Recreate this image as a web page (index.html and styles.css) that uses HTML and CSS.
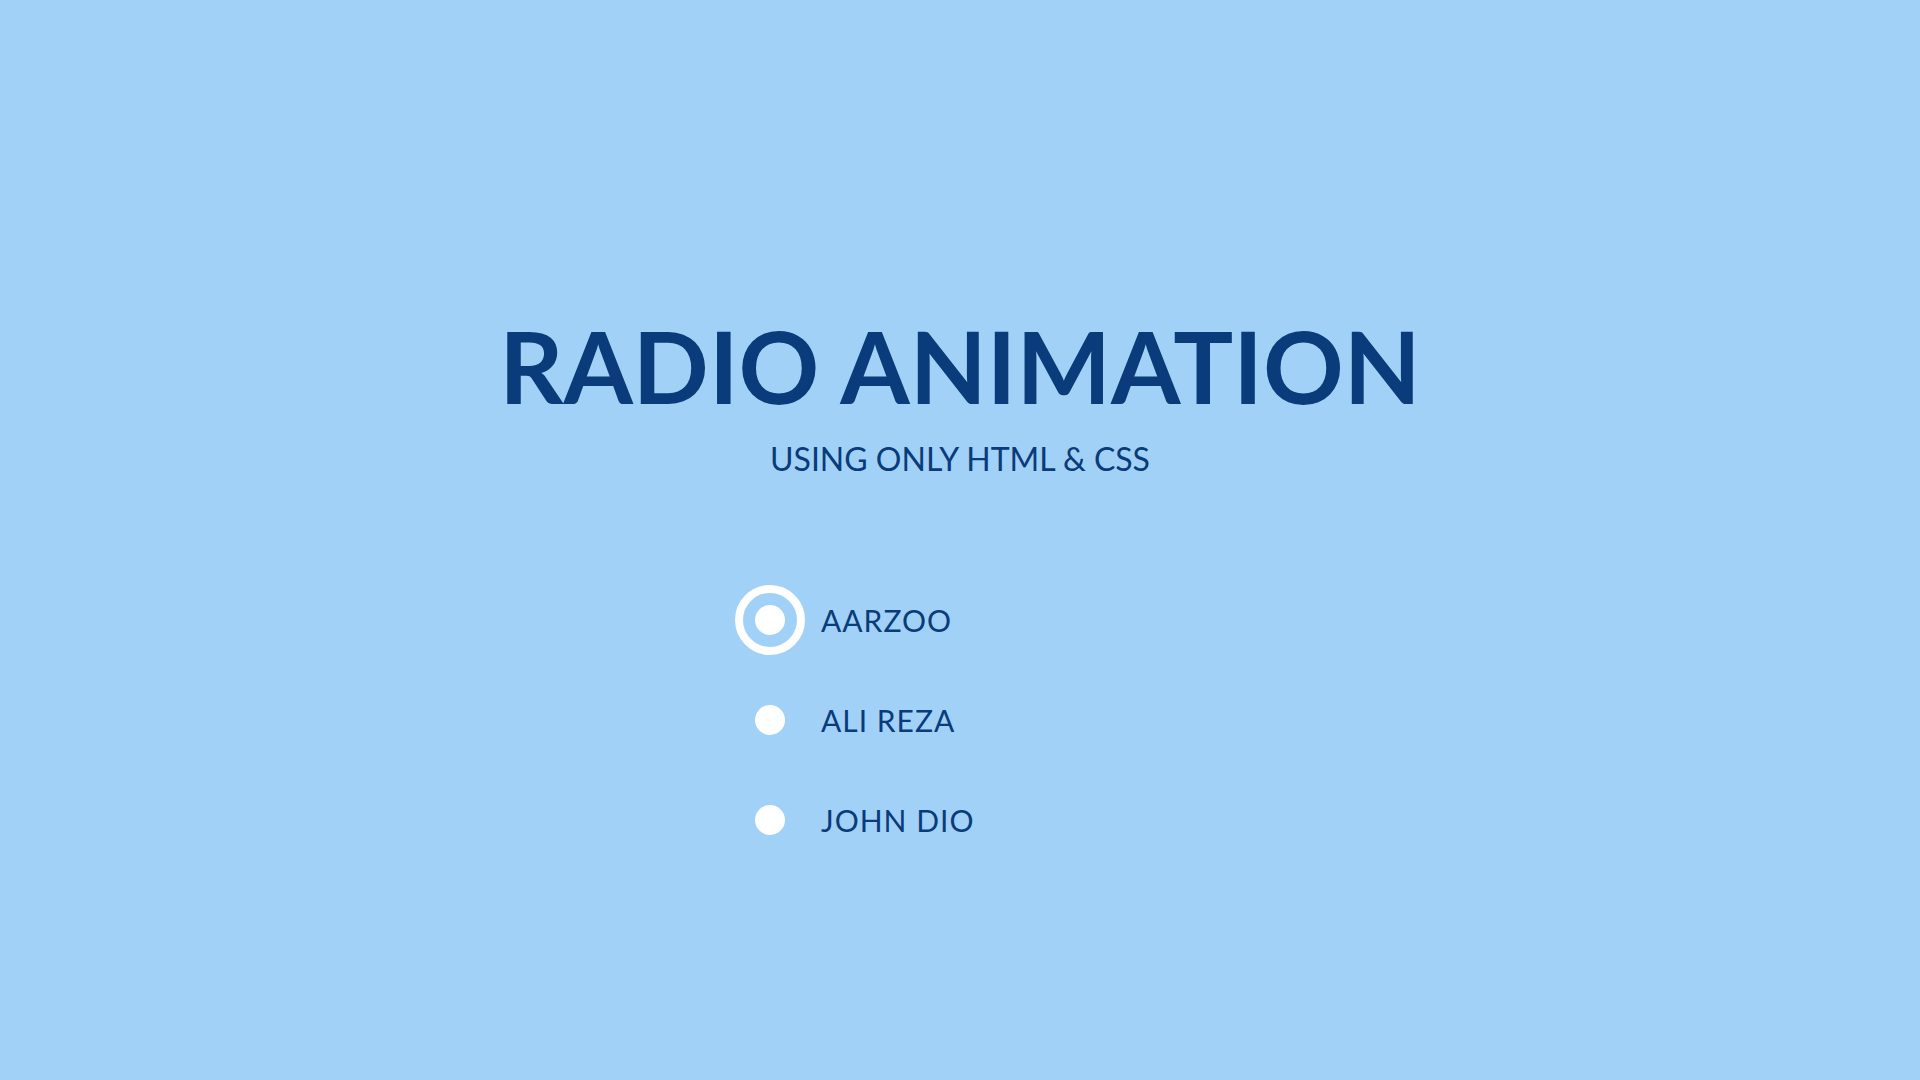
FILE: index.html
```html
<!DOCTYPE html>
<html>
<head>
<meta charset="utf-8">
<link rel="stylesheet" href="styles.css">
</head>
<body>
<main class="page">
  <h1 class="title">RADIO ANIMATION</h1>
  <p class="subtitle">USING ONLY HTML &amp; CSS</p>
  <div class="options">
    <label class="option">
      <span class="radio checked"></span>
      <span class="label">AARZOO</span>
    </label>
    <label class="option">
      <span class="radio"></span>
      <span class="label">ALI REZA</span>
    </label>
    <label class="option">
      <span class="radio"></span>
      <span class="label">JOHN DIO</span>
    </label>
  </div>
</main>
</body>
</html>
```
FILE: styles.css
```css
html, body {
  margin: 0;
  padding: 0;
}
body {
  background: #a2d1f7;
  color: #0a3b7a;
  font-family: "Lato", "Open Sans", sans-serif;
  width: 1920px;
  height: 1080px;
  overflow: hidden;
}
.page {
  display: flex;
  flex-direction: column;
  align-items: center;
  padding-top: 313px;
}
.title {
  margin: 0;
  font-size: 100px;
  font-weight: 700;
  line-height: 104px;
  letter-spacing: 0;
}
.subtitle {
  margin: 22px 0 0;
  font-size: 32px;
  line-height: 40px;
  font-weight: 400;
}
.options {
  width: 450px;
  margin-top: 106px;
  display: flex;
  flex-direction: column;
  gap: 30px;
}
.option {
  display: flex;
  align-items: center;
  height: 70px;
}
.radio {
  width: 70px;
  height: 70px;
  display: flex;
  align-items: center;
  justify-content: center;
  flex: none;
}
.radio::after {
  content: "";
  width: 30px;
  height: 30px;
  border-radius: 50%;
  background: #ffffff;
}
.radio.checked {
  box-sizing: border-box;
  border: 8px solid #ffffff;
  border-radius: 50%;
}
.label {
  margin-left: 16px;
  font-size: 30px;
  letter-spacing: 1px;
}
```
